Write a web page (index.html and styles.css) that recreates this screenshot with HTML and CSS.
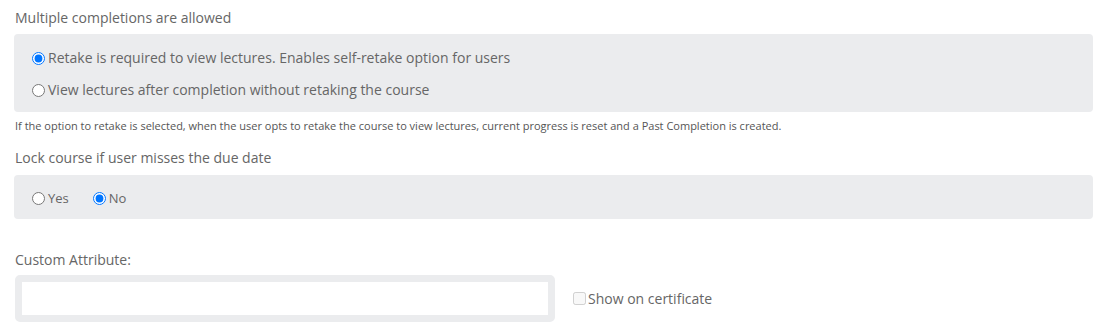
FILE: index.html
```html
<!DOCTYPE html>
<html lang="en">
<head>
    <meta charset="UTF-8" />
    <title>Course settings</title>
    <link rel="stylesheet" href="styles.css">
</head>
<body>

    <div class="setting">
        <div class="setting-title">Multiple completions are allowed</div>
        <div class="option-box">
            <label class="option-row">
                <input type="radio" name="retake" checked />
                <span>Retake is required to view lectures. Enables self-retake option for users</span>
            </label>
            <label class="option-row">
                <input type="radio" name="retake" />
                <span>View lectures after completion without retaking the course</span>
            </label>
        </div>
        <div class="help-text">If the option to retake is selected, when the user opts to retake the course to view lectures, current progress is reset and a Past Completion is created.</div>
    </div>

    <div class="setting">
        <div class="setting-title">Lock course if user misses the due date</div>
        <div class="option-box inline">
            <label class="option-row">
                <input type="radio" name="lock" />
                <span>Yes</span>
            </label>
            <label class="option-row">
                <input type="radio" name="lock" checked />
                <span>No</span>
            </label>
        </div>
    </div>

    <div class="setting custom">
        <div class="setting-title">Custom Attribute:</div>
        <div class="custom-row">
            <input type="text" class="custom-input" />
            <label class="cert-check">
                <input type="checkbox" disabled />
                <span>Show on certificate</span>
            </label>
        </div>
    </div>

</body>
</html>
```

FILE: styles.css
```css
body {
    margin: 0;
    padding: 8px 16px 0 14px;
    font-family: 'Open Sans', sans-serif;
    font-size: 14px;
    color: #666;
    background-color: #fff;
}

.setting-title {
    line-height: 20px;
    margin-left: 1px;
    margin-bottom: 6px;
}

.option-box {
    background-color: #ebecee;
    border-radius: 4px;
    padding: 14px 18px 12px;
    display: flex;
    flex-direction: column;
    gap: 12px;
}

.option-box.inline {
    flex-direction: row;
    gap: 24px;
    height: 44px;
    box-sizing: border-box;
    padding: 13px 18px 11px;
}

.option-row {
    display: flex;
    align-items: center;
    line-height: 20px;
}

.option-row input {
    margin: 0 3px 0 0;
    width: 13px;
    height: 13px;
}

.inline .option-row {
    font-size: 13px;
}

.help-text {
    font-size: 11px;
    line-height: 14px;
    margin: 7px 0 0 1px;
    color: #555;
}

.setting + .setting {
    margin-top: 15px;
}

.setting + .setting .setting-title {
    margin-bottom: 7px;
}

.setting.custom {
    margin-top: 31px;
}

.setting.custom .setting-title {
    margin-bottom: 5px;
}

.custom-row {
    display: flex;
    align-items: center;
    gap: 18px;
}

.custom-input {
    box-sizing: border-box;
    width: 540px;
    height: 47px;
    margin: 0 0 0 1px;
    border: 7px solid #ebecee;
    border-radius: 5px;
    background: #fff;
    outline: none;
}

.cert-check {
    display: flex;
    align-items: center;
    line-height: 20px;
}

.cert-check input {
    margin: 0 2px 0 0;
    width: 13px;
    height: 13px;
}
```
